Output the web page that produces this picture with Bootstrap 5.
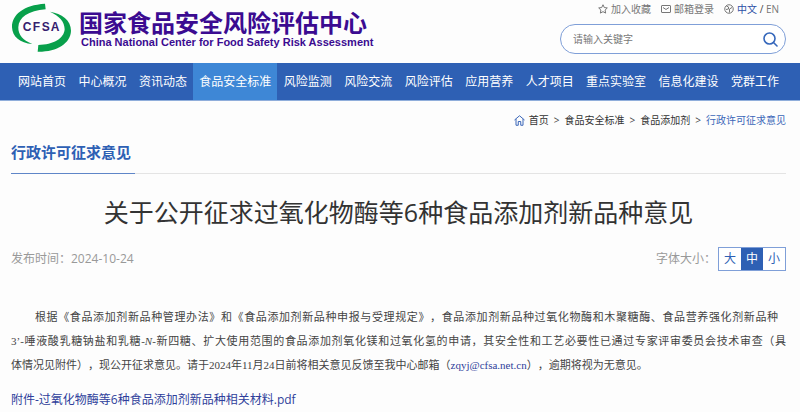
<!DOCTYPE html>
<html lang="zh-CN">
<head>
<meta charset="utf-8">
<meta name="viewport" content="width=device-width, initial-scale=1">
<title>国家食品安全风险评估中心</title>
<link href="https://cdn.jsdelivr.net/npm/bootstrap@5.3.0/dist/css/bootstrap.min.css" rel="stylesheet">
<style>
:root{--blue:#2e60b4}
body{font-family:"Open Sans","Noto Sans CJK SC",sans-serif;font-size:12px;line-height:18px;color:#444;background:#fdfdfd}
a{text-decoration:none}
.site-head{padding:0 14px 0 11px;height:63px}
.logo-art{width:62px;height:52px}
.brand-cn{font-family:"Noto Sans CJK SC",sans-serif;font-size:24px;line-height:28px;font-weight:700;color:#3b0b91;padding-top:8px}
.brand-en{font-family:"Liberation Sans",sans-serif;font-size:11px;line-height:12px;font-weight:700;color:#3b0b91;padding-left:2px}
.brand-text{padding-left:6px}
.tools{width:226px}
.tool-links{font-size:10px;line-height:18px;padding-right:7px;gap:10px}
.tool-links a{color:#777}
.tool-links a.lang{color:#2c4fa5}
.tool-links svg{width:10px;height:10px;margin-right:3px}
.search-box{height:30px;border:1px solid #7f9fd8;border-radius:15px;padding:0 7px 0 12px;margin-top:6px;background:#fff}
.search-box input{font-size:10px;color:#555;min-width:0}
.search-box input::placeholder{color:#777;opacity:1}
.search-box svg{width:15px;height:15px}
.main-nav{background:var(--blue);padding:0 15px 0 12px;border-bottom:1px solid #90aedb}
.main-nav a{color:#fff;line-height:37px;padding:0 6px}
.main-nav a.active{background:#3e87d6}
.page-body{padding:0 14px 0 11px}
.crumbs{font-size:10px;line-height:20px;padding-top:9px;gap:5px}
.crumbs a{color:#333}
.crumbs .here{color:#3b66b8}
.section-line{border-bottom:1px solid #e4e4e4;margin-top:10px}
.section-name{font-size:15px;line-height:24px;font-weight:700;color:var(--blue);border-bottom:1px solid #5f86c8;padding:0 4px 9px 0;margin:0 0 -1px}
.headline{font-size:25px;line-height:36px;font-weight:400;color:#333;margin:20px 0 17px}
.meta{color:#999}
.size-pick{border:1px solid #7f9fd8;margin-left:2px}
.size-pick button{width:22px;line-height:22px;border:0;padding:0;background:#fff;color:var(--blue)}
.size-pick button.on{background:var(--blue);color:#fff}
.article{font-family:"Liberation Serif","Noto Sans CJK SC",serif;font-size:11px;line-height:24px;color:#444;margin:34px 0 14px;text-align:justify;text-spacing-trim:space-all}
.article .full{text-align-last:justify}
.article .first{padding:0 8px 0 24px}
.article a,.attachment{color:#2f3f9b}
</style>
<script src="https://cdn.jsdelivr.net/npm/bootstrap@5.3.0/dist/js/bootstrap.bundle.min.js"></script>
</head>
<body>
<header class="site-head d-flex justify-content-between">
  <a href="#" class="d-flex text-nowrap">
    <svg class="logo-art" viewBox="0 0 186 156" aria-hidden="true">
      <path fill="#08a04b" d="M102 11C37 15 2 45 3 82c1 28 24 48 61 50C37 122 21 105 22 82c1-30 30-50 82-54zM117 35c35 6 63 25 63 57-1 38-43 64-100 63l2-20c45-1 77-19 79-47 0-23-16-40-44-53z"/>
      <text x="35 65 92 119" y="93" font-family="Liberation Sans, sans-serif" font-weight="700" font-size="36" fill="#35206e">CFSA</text>
    </svg>
    <span class="brand-text d-block">
      <span class="brand-cn d-block">国家食品安全风险评估中心</span>
      <span class="brand-en d-block">China National Center for Food Safety Risk Assessment</span>
    </span>
  </a>
  <div class="tools">
    <div class="tool-links d-flex justify-content-end text-nowrap">
      <a href="#" class="d-flex align-items-center"><svg viewBox="0 0 20 20" fill="none" stroke="#777" stroke-width="2" stroke-linejoin="round"><path d="M10 1.500l2.600 5.600 6 .8-4.400 4.200 1.100 6.100L10 15.300l-5.300 2.900 1.100-6.100L1.400 7.900l6-.8z"/></svg>加入收藏</a>
      <a href="#" class="d-flex align-items-center"><svg viewBox="0 0 20 20" fill="none" stroke="#777" stroke-width="2"><rect x="1" y="3" width="18" height="14" rx="1"/><path d="M4 7l6 4 6-4"/></svg>邮箱登录</a>
      <span class="d-flex align-items-center"><svg viewBox="0 0 20 20" fill="none" stroke="#777" stroke-width="2"><circle cx="10" cy="10" r="8.500"/><path d="M5 4l4 2v4l-5 1M11 17v-7l5-3"/></svg><a href="#" class="lang">中文</a>&nbsp;/&nbsp;<a href="#">EN</a></span>
    </div>
    <form class="search-box d-flex align-items-center">
      <input class="flex-grow-1 border-0 bg-transparent p-0" type="text" placeholder="请输入关键字" aria-label="请输入关键字">
      <button type="button" class="border-0 bg-transparent p-0 d-flex" aria-label="搜索"><svg viewBox="0 0 15 15" fill="none" stroke="#3567bb" stroke-width="1.600" stroke-linecap="round"><circle cx="6.500" cy="6.500" r="5.500"/><path d="M10.500 10.500l3.500 3.500"/></svg></button>
    </form>
  </div>
</header>
<nav class="main-nav d-flex justify-content-between text-nowrap">
  <a href="#">网站首页</a><a href="#">中心概况</a><a href="#">资讯动态</a><a href="#" class="active">食品安全标准</a><a href="#">风险监测</a><a href="#">风险交流</a><a href="#">风险评估</a><a href="#">应用营养</a><a href="#">人才项目</a><a href="#">重点实验室</a><a href="#">信息化建设</a><a href="#">党群工作</a>
</nav>
<main class="page-body">
  <div class="crumbs d-flex justify-content-end align-items-center text-nowrap">
    <a href="#" class="d-flex align-items-center"><svg class="me-1" width="11" height="11" viewBox="0 0 22 22" fill="none" stroke="#3b66b8" stroke-width="2" stroke-linejoin="round"><path d="M1 10L11 1.500 21 10M4 8v12.500h4.500V13h5v7.500H18V8"/></svg>首页</a><span>&gt;</span><a href="#">食品安全标准</a><span>&gt;</span><a href="#">食品添加剂</a><span>&gt;</span><a href="#" class="here">行政许可征求意见</a>
  </div>
  <div class="section-line d-flex"><h2 class="section-name">行政许可征求意见</h2></div>
  <h1 class="headline text-center">关于公开征求过氧化物酶等6种食品添加剂新品种意见</h1>
  <div class="meta d-flex justify-content-between align-items-center">
    <span>发布时间：2024-10-24</span>
    <div class="d-flex align-items-center"><span>字体大小：</span>
      <div class="size-pick d-flex"><button type="button">大</button><button type="button" class="on">中</button><button type="button">小</button></div>
    </div>
  </div>
  <p class="article">
    <span class="full first d-block">根据《食品添加剂新品种管理办法》和《食品添加剂新品种申报与受理规定》，食品添加剂新品种过氧化物酶和木聚糖酶、食品营养强化剂新品种</span>
    <span class="full d-block">3’-唾液酸乳糖钠盐和乳糖-<i>N</i>-新四糖、扩大使用范围的食品添加剂氧化镁和过氧化氢的申请，其安全性和工艺必要性已通过专家评审委员会技术审查（具</span>
    <span class="d-block">体情况见附件），现公开征求意见。请于2024年11月24日前将相关意见反馈至我中心邮箱（<a href="#">zqyj@cfsa.net.cn</a>），逾期将视为无意见。</span>
  </p>
  <a href="#" class="attachment">附件-过氧化物酶等6种食品添加剂新品种相关材料.pdf</a>
</main>
</body>
</html>
